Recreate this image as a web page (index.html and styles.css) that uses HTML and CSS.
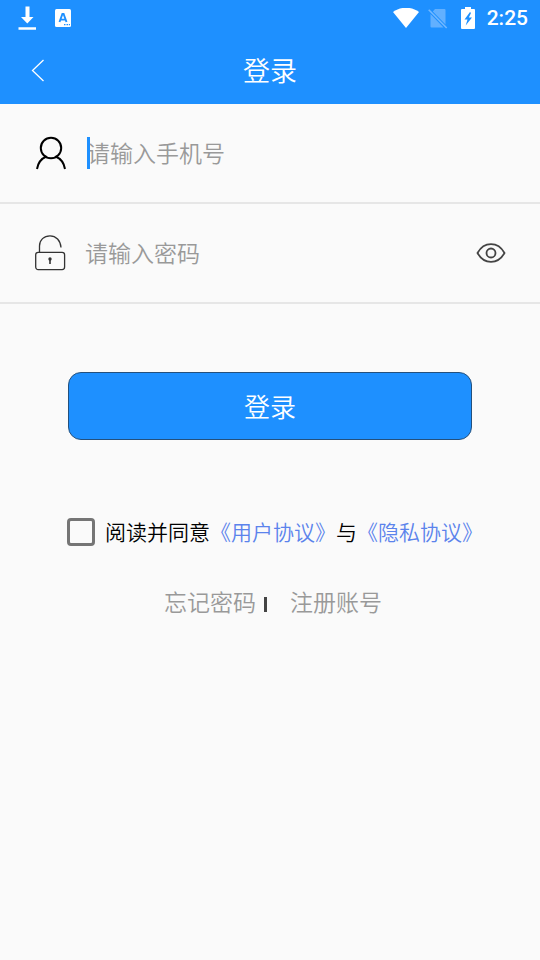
FILE: index.html
```html
<!DOCTYPE html>
<html lang="zh-CN">
<head>
<meta charset="utf-8">
<meta name="viewport" content="width=device-width, initial-scale=1">
<title>登录</title>
<link rel="stylesheet" href="styles.css">
</head>
<body>
<div class="status">
  <div class="status-group">
    <svg width="20" height="24" viewBox="0 0 20 24" fill="#fff" aria-hidden="true"><path d="M8.500 0.500h4v10.500h4L10.300 17.500 4 11h4.500zM1.500 21.200h17.500v2.500H1.500z"/></svg>
    <svg class="app-icon" width="16" height="18" viewBox="0 0 16 18" aria-hidden="true"><rect width="16" height="18" rx="1.500" fill="#fff"/><path d="M4.500 13 7.400 5h1.200l2.900 8M5.700 10.600h4.600" fill="none" stroke="#1e90ff" stroke-width="1.900"/><path d="M9 15h1.500v1.300H9zm2.500 0H13v1.300h-1.500zm2.300 0H15v1.300h-1.200z" fill="#1e90ff"/></svg>
  </div>
  <div class="status-group">
    <svg width="26" height="21" viewBox="0 0 26 21" aria-hidden="true"><path d="M0 4C7.500-1.700 18.500-1.700 26 4L13 20z" fill="#fff"/></svg>
    <svg class="sim" width="20" height="21" viewBox="0 0 20 21" aria-hidden="true"><path d="M7 1h9.500q1 0 1 1v14.500L4.800 3.500zM2.500 6 15.500 19.500H3.500q-1 0-1-1z" fill="#62b0ff"/><path d="M.7 1.800 18.700 20" stroke="#72b8ff" stroke-width="1.600"/></svg>
    <svg class="battery" width="14" height="22" viewBox="0 0 14 22" aria-hidden="true"><path d="M4 0h6v2h3q1 0 1 1v18q0 1-1 1H1q-1 0-1-1V3q0-1 1-1h3z" fill="#fff"/><path d="M9 5 3.500 12.500h3l-1.800 6L11 10.500H7.800L10 6z" fill="#1e90ff"/></svg>
    <span class="clock">2:25</span>
  </div>
</div>
<header class="header">
  <button class="back" type="button" aria-label="返回"><svg width="14" height="24" viewBox="0 0 14 24" fill="none" stroke="#fff" stroke-width="1.300" aria-hidden="true"><path d="M12.500 2 1.500 12.500l11 10.500"/></svg></button>
  <h1>登录</h1>
</header>
<form>
  <div class="row">
    <label for="phone"><svg width="32" height="36" viewBox="0 0 32 36" fill="none" stroke="#000" stroke-width="2" aria-hidden="true"><circle cx="16" cy="13" r="10.200"/><path d="M2 34C3 28 6.500 23.500 11.500 21.500M20.500 21.500c5 2 8.500 6.500 9.500 12.500"/></svg></label>
    <div class="field"><input id="phone" type="tel" placeholder="请输入手机号" aria-label="手机号"><span class="caret"></span></div>
  </div>
  <div class="row">
    <label for="password"><svg width="32" height="36" viewBox="0 0 32 36" fill="none" stroke="#333" stroke-width="1.300" aria-hidden="true"><rect x=".7" y="17.300" width="28.900" height="17.300" rx="2.500"/><path d="M4.500 17.300V11C4.500 5 9 .8 15 .8S25.500 5.500 26 12.500"/><circle cx="15" cy="24" r="1.700" fill="#333" stroke="none"/><path d="M15 23.500v5.500" stroke-width="1.600"/></svg></label>
    <div class="field"><input id="password" type="password" placeholder="请输入密码" aria-label="密码"></div>
    <button class="eye" type="button" aria-label="显示密码"><svg width="30" height="22" viewBox="0 0 30 22" fill="none" stroke="#444" stroke-width="1.800" aria-hidden="true"><path d="M1.500 11C8-.8 22-.8 28.500 11 22 22.800 8 22.800 1.500 11z"/><circle cx="15" cy="11" r="4.500"/></svg></button>
  </div>
  <button class="submit" type="submit">登录</button>
  <div class="agree">
    <input id="agree" type="checkbox">
    <span><label for="agree">阅读并同意</label><a href="#terms">《用户协议》</a>与<a href="#privacy">《隐私协议》</a></span>
  </div>
  <nav class="links">
    <a href="#forgot">忘记密码</a><span class="divider"></span><a href="#register">注册账号</a>
  </nav>
</form>
</body>
</html>
```
FILE: styles.css
```css
* { box-sizing: border-box; }
body {
  margin: 0;
  background: #fafafa;
  color: #000;
  font-family: Roboto, "Noto Sans CJK SC", sans-serif;
  font-weight: 350;
}
button { padding: 0; border: 0; background: none; font: inherit; cursor: pointer; }
svg { display: block; }
a { text-decoration: none; }

.status {
  display: flex;
  justify-content: space-between;
  height: 36px;
  padding: 0 12px 0 17px;
  background: #1e90ff;
}
.status-group { display: flex; align-items: center; }
.app-icon { margin-left: 18px; }
.sim { margin-left: 9px; }
.battery { margin: 0 12px 0 13px; }
.clock { color: #fff; font-size: 21px; font-weight: 500; line-height: 38px; }

.header {
  display: grid;
  grid-template-columns: 76px 1fr 76px;
  align-items: center;
  height: 68px;
  background: #1e90ff;
}
.back { display: flex; justify-content: center; }
h1 {
  margin: 0;
  padding-top: 4px;
  color: #fff;
  font-size: 27px;
  font-weight: 350;
  line-height: 40px;
  text-align: center;
}

.row {
  display: flex;
  align-items: center;
  height: 100px;
  padding: 0 34px 0 35px;
  border-bottom: 2px solid #e6e6e6;
}
.field { position: relative; flex: 1; margin-left: 18px; }
.field input {
  display: block;
  width: 100%;
  height: 40px;
  padding: 3px 0 0;
  border: 0;
  outline: 0;
  background: none;
  color: #333;
  font: 350 23px Roboto, "Noto Sans CJK SC", sans-serif;
}
.field input::placeholder { color: #999; opacity: 1; }
#phone { padding-left: 2px; }
.caret {
  position: absolute;
  top: 4px;
  left: 2px;
  width: 3px;
  height: 32px;
  background: #1e90ff;
}

.submit {
  display: block;
  width: calc(100% - 136px);
  height: 68px;
  margin: 68px auto 0;
  padding-bottom: 2px;
  border: 1px solid #24507c;
  border-radius: 13px;
  background: #1e90ff;
  color: #fff;
  font-size: 26px;
}

.agree {
  display: flex;
  align-items: center;
  justify-content: center;
  gap: 10px;
  margin-top: 75px;
  padding-left: 10px;
  font-size: 21px;
  line-height: 32px;
  white-space: nowrap;
}
.agree span { padding-top: 2px; }
.agree input {
  flex: none;
  appearance: none;
  width: 28px;
  height: 28px;
  margin: 0;
  border: 3px solid #757575;
  border-radius: 4px;
}
.agree input:checked { background: #1e90ff; }
.agree a { color: #5b83ec; }

.links {
  display: flex;
  align-items: center;
  justify-content: center;
  margin-top: 38px;
  padding-left: 6px;
  font-size: 23px;
  line-height: 34px;
}
.links a { color: #999; }
.divider { width: 3px; height: 15px; margin: 1px 23px 0 8px; background: #444; }
```
